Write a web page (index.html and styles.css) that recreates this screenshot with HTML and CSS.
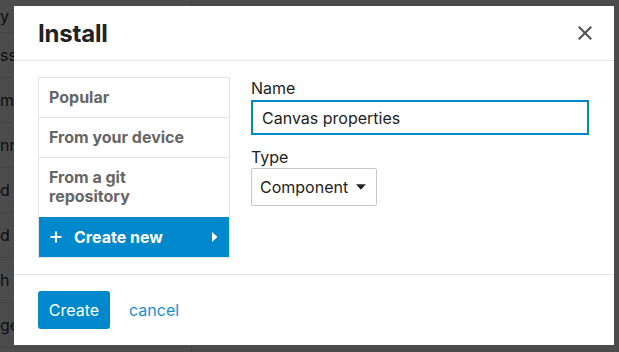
FILE: index.html
```html
<!DOCTYPE html>
<html>
<head>
<meta charset="utf-8">
<link rel="stylesheet" href="styles.css">
</head>
<body>
<div class="page">
  <div class="sidebar">
    <div class="row first">y l</div>
    <div class="row">ss</div>
    <div class="row">m</div>
    <div class="row">nn</div>
    <div class="row">d C</div>
    <div class="row">d T</div>
    <div class="row">h</div>
    <div class="row">ge</div>
  </div>
  <div class="main"></div>
</div>
<div class="overlay"></div>
<div class="modal">
  <div class="modal-header">
    <h1 class="title">Install</h1>
    <button class="close" aria-label="Close">
      <svg width="14" height="14" viewBox="0 0 14 14"><path d="M1.5 1.5 L12.5 12.5 M12.5 1.5 L1.5 12.5" stroke="#555" stroke-width="2.2" fill="none" stroke-linecap="square"/></svg>
    </button>
  </div>
  <div class="modal-body">
    <ul class="tabs">
      <li class="tab">Popular</li>
      <li class="tab">From your device</li>
      <li class="tab multi">From a git<br>repository</li>
      <li class="tab active">
        <svg class="plus" width="12" height="12" viewBox="0 0 12 12"><path d="M6 0.5 V11.5 M0.5 6 H11.5" stroke="#fff" stroke-width="2" fill="none"/></svg>
        <span class="tab-label">Create new</span>
        <svg class="caret-right" width="6" height="10" viewBox="0 0 6 10"><path d="M0 0 L5.5 5 L0 10 Z" fill="#fff"/></svg>
      </li>
    </ul>
    <div class="form">
      <label class="label">Name</label>
      <div class="input">Canvas properties</div>
      <label class="label type-label">Type</label>
      <div class="select">
        <span>Component</span>
        <svg width="11" height="6" viewBox="0 0 11 6"><path d="M0 0 H11 L5.5 6 Z" fill="#222"/></svg>
      </div>
    </div>
  </div>
  <div class="modal-footer">
    <button class="btn-primary">Create</button>
    <a class="cancel" href="#">cancel</a>
  </div>
</div>
</body>
</html>
```
FILE: styles.css
```css
* { box-sizing: border-box; }
html, body { margin: 0; padding: 0; }
body {
  width: 619px;
  height: 352px;
  overflow: hidden;
  font-family: Inter, "Noto Sans", sans-serif;
  background: #f4f4f4;
  position: relative;
}
.page {
  display: flex;
  height: 352px;
}
.sidebar {
  width: 192px;
  border-right: 1px solid #ddd;
  background: #fff;
}
.row {
  height: 45px;
  border-bottom: 1px solid #e0e0e0;
  display: flex;
  align-items: center;
  font-size: 16px;
  color: #333;
  white-space: nowrap;
}
.row.first { height: 33px; }
.main { flex: 1; background: #fafafa; }
.overlay {
  position: absolute;
  inset: 0;
  background: rgba(0, 0, 0, 0.7);
}
.modal {
  position: absolute;
  left: 14px;
  top: 6px;
  width: 600px;
  height: 339px;
  background: #fff;
  display: flex;
  flex-direction: column;
}
.modal-header {
  height: 55px;
  border-bottom: 1px solid #e5e5e5;
  display: flex;
  align-items: center;
  justify-content: space-between;
  padding: 0 22px 0 24px;
}
.title {
  margin: 0;
  font-size: 24px;
  font-weight: 700;
  color: #222;
  letter-spacing: -0.2px;
}
.close {
  border: 0;
  background: none;
  padding: 0;
  width: 14px;
  height: 14px;
  display: flex;
}
.modal-body {
  display: flex;
  padding: 16px 25px 0 24px;
  height: 214px;
  border-bottom: 1px solid #e5e5e5;
  gap: 21px;
}
.tabs {
  list-style: none;
  margin: 0;
  padding: 0;
  width: 192px;
  border: 1px solid #e5e5e5;
  align-self: flex-start;
}
.tab {
  padding: 10px 10px;
  line-height: 19px;
  font-size: 16px;
  font-weight: 700;
  color: #666;
  border-top: 1px solid #e5e5e5;
}
.tab:first-child { border-top: 0; }
.tab.multi { padding-bottom: 11px; }
.tab.active {
  background: #0088cc;
  color: #fff;
  display: flex;
  align-items: center;
  border-top: 0;
  height: 40px;
  padding: 0 10px 0 11px;
}
.plus { margin-right: 12px; }
.tab-label { flex: 1; }
.caret-right { margin-right: 1px; }
.form {
  flex: 1;
  display: flex;
  flex-direction: column;
  align-items: flex-start;
  padding-top: 1px;
}
.label {
  font-size: 16px;
  line-height: 20px;
  color: #222;
  margin-bottom: 2px;
}
.type-label { margin-top: 12px; margin-bottom: 1px; }
.input {
  width: 100%;
  height: 35px;
  border: 2px solid #0088cc;
  padding: 0 9px;
  display: flex;
  align-items: center;
  font-size: 16px;
  color: #222;
}
.select {
  width: 126px;
  height: 38px;
  border: 1px solid #c8c8c8;
  border-radius: 2px;
  display: flex;
  align-items: center;
  padding: 0 10px 0 8px;
  gap: 8px;
  font-size: 16px;
  color: #222;
}
.modal-footer {
  flex: 1;
  display: flex;
  align-items: flex-start;
  padding: 16px 24px 0;
  gap: 19px;
}
.btn-primary {
  width: 72px;
  height: 38px;
  border: 0;
  border-radius: 3px;
  background: #0088cc;
  color: #fff;
  font-family: inherit;
  font-size: 16px;
  padding: 0;
}
.cancel {
  line-height: 38px;
  font-size: 16px;
  color: #1a8fd0;
  text-decoration: none;
}
```
